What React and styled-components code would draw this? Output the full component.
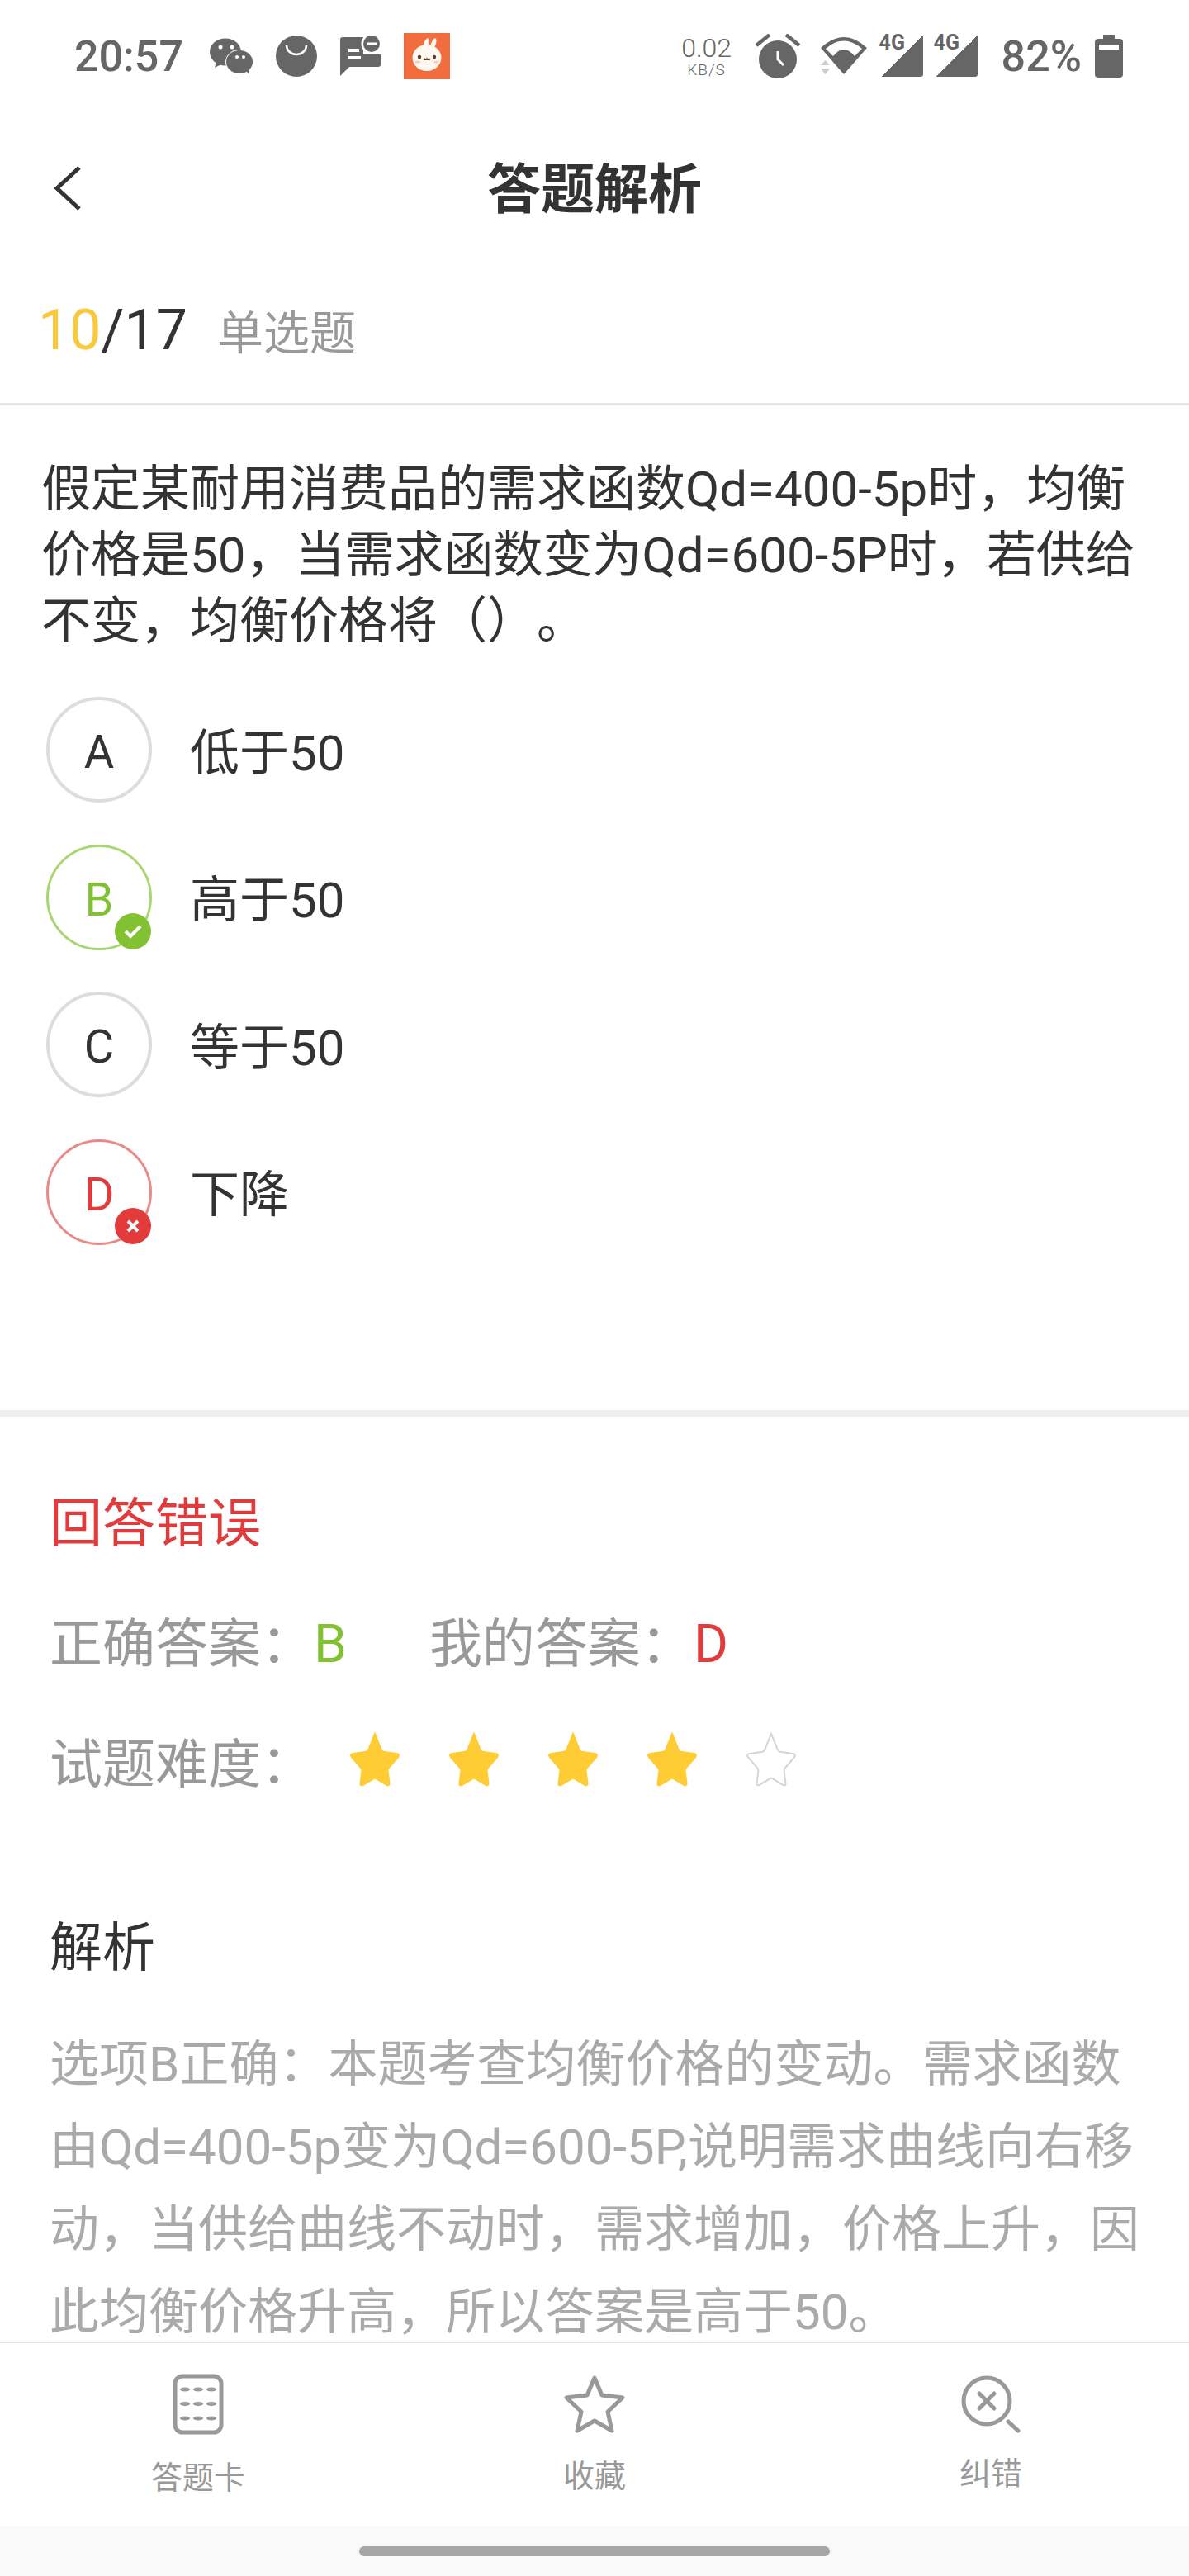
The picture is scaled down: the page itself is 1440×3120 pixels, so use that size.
import styled, { createGlobalStyle } from "styled-components";

const GREEN = "#82c232";
const RED = "#e23b3b";

const options = [
  { key: "A", text: "低于50" },
  { key: "B", text: "高于50", state: "right" },
  { key: "C", text: "等于50" },
  { key: "D", text: "下降", state: "wrong" },
];

const STAR_PATH =
  "M32 4 L40 24 Q41 26 43 26.500 L60 29 Q63 30 61 33 L49 47 Q48 48 48 50 L50 66 Q50 69 47 68 L33 59.500 Q32 59 31 59.500 L17 68 Q14 69 14 66 L16 50 Q16 48 15 47 L3 33 Q1 30 4 29 L21 26.500 Q23 26 24 24 Z";

function WechatIcon() {
  return (
    <svg width="52" height="44" viewBox="0 0 52 44">
      <ellipse cx="19" cy="17" rx="19" ry="16.500" fill="#666" />
      <path d="M8 28l-2 8 10-5z" fill="#666" />
      <circle cx="13" cy="11" r="2.500" fill="#fff" />
      <circle cx="27" cy="11" r="2.500" fill="#fff" />
      <ellipse cx="36" cy="29" rx="17" ry="15" fill="#fff" />
      <ellipse cx="36" cy="29" rx="16" ry="14" fill="#666" />
      <path d="M42 38l6 6-1-9z" fill="#666" />
      <circle cx="33" cy="23" r="2" fill="#fff" />
      <circle cx="41" cy="23" r="2" fill="#fff" />
    </svg>
  );
}

function BagIcon() {
  return (
    <svg width="50" height="50" viewBox="0 0 50 50">
      <circle cx="25" cy="25" r="25" fill="#666" />
      <path d="M13 12a12 11 0 0 0 24 0" fill="none" stroke="#fff" strokeWidth="2.500" />
    </svg>
  );
}

function NoticeIcon() {
  return (
    <svg width="49" height="48" viewBox="0 0 49 48">
      <path d="M3 1h25v21h21v12q0 3-3 3H11L0 48V4q0-3 3-3z" fill="#666" />
      <rect x="10" y="15" width="13" height="4" fill="#fff" />
      <rect x="10" y="24" width="15" height="4" fill="#fff" />
      <circle cx="38" cy="9" r="12.500" fill="#fff" />
      <circle cx="38" cy="9" r="10" fill="#666" />
      <rect x="32" y="7.500" width="12" height="3" fill="#fff" />
    </svg>
  );
}

function RabbitIcon() {
  return (
    <svg width="56" height="56" viewBox="0 0 56 56">
      <rect width="56" height="56" fill="#f26d3d" />
      <ellipse cx="27" cy="13" rx="2.800" ry="7" fill="#fff8f0" transform="rotate(20 27 13)" />
      <ellipse cx="36" cy="13" rx="2.800" ry="7" fill="#fff8f0" transform="rotate(20 36 13)" />
      <ellipse cx="28" cy="30" rx="17.500" ry="16" fill="#fff8f0" />
      <circle cx="19" cy="29" r="2.200" fill="#6b3a1e" />
      <circle cx="37" cy="29" r="2.200" fill="#6b3a1e" />
      <path d="M24 33l1-3 2 2 1-3 1 3 2-2 1 3z" fill="#6b3a1e" />
      <ellipse cx="17" cy="35" rx="3" ry="1.500" fill="#f9c9c0" />
      <ellipse cx="40" cy="35" rx="3" ry="1.500" fill="#f9c9c0" />
    </svg>
  );
}

function AlarmIcon() {
  return (
    <AlarmSvg width="54" height="54" viewBox="0 0 54 54">
      <path d="M1 14L17 1M37 1L53 14" stroke="#666" strokeWidth="4.500" />
      <circle cx="27" cy="31" r="23" fill="#666" />
      <path d="M27 21v10l7 7" fill="none" stroke="#fff" strokeWidth="3" />
    </AlarmSvg>
  );
}

function WifiIcon() {
  return (
    <WifiSvg width="56" height="46" viewBox="0 0 56 46">
      <path d="M0 13Q28-13 56 13L28 45z" fill="#666" />
      <path d="M6 14Q28-5 50 14L41 23Q28 7 15 23Z" fill="#fff" />
      <path d="M0 34L5.500 28L11 34zM0 38H11L5.500 45z" fill="#ccc" />
    </WifiSvg>
  );
}

function BatteryIcon() {
  return (
    <svg width="34" height="52" viewBox="0 0 34 52">
      <path d="M10 0h14v5h6q4 0 4 4v39q0 4-4 4H4q-4 0-4-4V9q0-4 4-4h6z" fill="#666" />
      <rect x="5" y="12" width="24" height="6" fill="#fff" />
    </svg>
  );
}

function CardIcon() {
  const dots = [];
  for (let r = 0; r < 3; r++) {
    for (let c = 0; c < 3; c++) {
      dots.push(<ellipse key={`${r}${c}`} cx={15 + c * 16} cy={19 + r * 17.500} rx="6" ry="2.500" fill="#999" />);
    }
  }
  return (
    <svg width="62" height="74" viewBox="0 0 62 74">
      <rect x="3" y="3" width="56" height="68" rx="9" fill="none" stroke="#999" strokeWidth="5" />
      {dots}
    </svg>
  );
}

function StarOutlineIcon() {
  return (
    <svg width="74" height="72" viewBox="0 0 74 72" fill="none">
      <path
        d="M37 5L46 26L71 29L53 46L58 69L37 57L16 69L21 46L3 29L28 26Z"
        stroke="#999"
        strokeWidth="5"
        strokeLinejoin="round"
      />
    </svg>
  );
}

function SearchErrorIcon() {
  return (
    <svg width="72" height="70" viewBox="0 0 72 70" fill="none" stroke="#999" strokeWidth="5" strokeLinecap="round">
      <circle cx="31" cy="31" r="28" />
      <path d="M22 22l18 18M40 22L22 40" />
      <path d="M57 56l12 11" />
    </svg>
  );
}

export default function App() {
  return (
    <>
      <GlobalStyle />
      <Page>
        <StatusBar>
          <StatusLeft>
            <Clock>20:57</Clock>
            <WechatIcon />
            <BagIcon />
            <NoticeIcon />
            <RabbitIcon />
          </StatusLeft>
          <StatusRight>
            <Speed>
              <b>0.02</b>
              <span>KB/S</span>
            </Speed>
            <AlarmIcon />
            <WifiIcon />
            <Signal><small>4G</small></Signal>
            <Signal><small>4G</small></Signal>
            <BatteryText>82%</BatteryText>
            <BatteryIcon />
          </StatusRight>
        </StatusBar>

        <NavBar>
          <BackBtn>
            <svg width="36" height="56" viewBox="0 0 36 56" fill="none">
              <path d="M32 3L5 28l27 25" stroke="#333" strokeWidth="5" />
            </svg>
          </BackBtn>
          <Title>答题解析</Title>
        </NavBar>

        <Counter>
          <Progress>
            <em>10</em>/17
          </Progress>
          <QuestionType>单选题</QuestionType>
        </Counter>

        <Content>
          <Question>
            假定某耐用消费品的需求函数Qd=400-5p时，均衡价格是50，当需求函数变为Qd=600-5P时，若供给不变，均衡价格将（）。
          </Question>
          <OptionList>
            {options.map((option) => (
              <OptionRow key={option.key}>
                <OptionCircle $state={option.state}>
                  {option.key}
                  {option.state === "right" && (
                    <Badge $color={GREEN}>
                      <svg width="22" height="18" viewBox="0 0 22 18" fill="none">
                        <path d="M2 9l6 6L20 3" stroke="#fff" strokeWidth="4" />
                      </svg>
                    </Badge>
                  )}
                  {option.state === "wrong" && (
                    <Badge $color={RED}>
                      <svg width="18" height="18" viewBox="0 0 18 18" fill="none">
                        <path d="M3 3l12 12M15 3L3 15" stroke="#fff" strokeWidth="4" />
                      </svg>
                    </Badge>
                  )}
                </OptionCircle>
                <OptionText>{option.text}</OptionText>
              </OptionRow>
            ))}
          </OptionList>

          <Analysis>
            <ResultTitle>回答错误</ResultTitle>
            <AnswerRow>
              <span>正确答案：<AnswerKey $color={GREEN}>B</AnswerKey></span>
              <span>我的答案：<AnswerKey $color={RED}>D</AnswerKey></span>
            </AnswerRow>
            <DifficultyRow>
              <span>试题难度：</span>
              <Stars>
                {[1, 2, 3, 4, 5].map((n) => (
                  <svg key={n} width="68" height="70" viewBox="-1 -1 66 72">
                    <path
                      d={STAR_PATH}
                      fill={n < 5 ? "#ffcc33" : "#fff"}
                      stroke={n < 5 ? "#ffcc33" : "#d4d4d8"}
                      strokeWidth="2"
                    />
                  </svg>
                ))}
              </Stars>
            </DifficultyRow>
            <AnalysisTitle>解析</AnalysisTitle>
            <AnalysisText>
              选项B正确：本题考查均衡价格的变动。需求函数由Qd=400-5p变为Qd=600-5P,说明需求曲线向右移动，当供给曲线不动时，需求增加，价格上升，因此均衡价格升高，所以答案是高于50。
            </AnalysisText>
          </Analysis>
        </Content>

        <TabBar>
          <Tab>
            <CardIcon />
            <span>答题卡</span>
          </Tab>
          <Tab>
            <StarOutlineIcon />
            <span>收藏</span>
          </Tab>
          <Tab $compact>
            <SearchErrorIcon />
            <span>纠错</span>
          </Tab>
        </TabBar>

        <HomeArea>
          <HomePill />
        </HomeArea>
      </Page>
    </>
  );
}

const GlobalStyle = createGlobalStyle`
  html, body {
    margin: 0;
    padding: 0;
    background: #fff;
  }
  body {
    font-family: Roboto, "Noto Sans CJK SC", sans-serif;
    text-spacing-trim: space-all;
  }
`;

const Page = styled.div`
  width: 1440px;
  height: 3120px;
  display: flex;
  flex-direction: column;
  overflow: hidden;
  color: #333;
  background: #fff;
`;

const StatusBar = styled.div`
  height: 136px;
  flex-shrink: 0;
  display: flex;
  align-items: center;
  justify-content: space-between;
  padding: 0 80px 0 90px;
  color: #666;
`;

const StatusLeft = styled.div`
  display: flex;
  align-items: center;
  gap: 28px;
`;

const StatusRight = styled.div`
  display: flex;
  align-items: center;
  gap: 16px;
`;

const Clock = styled.span`
  font-size: 52px;
  font-weight: 500;
  margin-right: 4px;
`;

const Speed = styled.div`
  width: 58px;
  display: flex;
  flex-direction: column;
  align-items: center;
  margin-right: 14px;
  b {
    font-size: 32px;
    font-weight: 300;
    line-height: 34px;
  }
  span {
    font-size: 19px;
    font-weight: 300;
    line-height: 20px;
    letter-spacing: 1px;
  }
`;

const AlarmSvg = styled.svg`
  margin-right: 9px;
`;

const WifiSvg = styled.svg`
  margin-right: 2px;
`;

const Signal = styled.div`
  position: relative;
  width: 50px;
  height: 50px;
  background: linear-gradient(to bottom right, transparent 50%, #666 50%);
  border-bottom-right-radius: 3px;
  small {
    position: absolute;
    top: -3px;
    left: -3px;
    font-size: 25px;
    font-weight: 700;
    line-height: 24px;
  }
`;

const BatteryText = styled.span`
  font-size: 52px;
  font-weight: 500;
  margin-left: 13px;
`;

const NavBar = styled.div`
  position: relative;
  box-sizing: border-box;
  height: 184px;
  padding-bottom: 8px;
  flex-shrink: 0;
  display: flex;
  align-items: center;
  justify-content: center;
`;

const BackBtn = styled.div`
  position: absolute;
  left: 64px;
  top: 64px;
  line-height: 0;
`;

const Title = styled.h1`
  margin: 0;
  font-size: 65px;
  font-weight: 700;
  color: #333;
`;

const Counter = styled.div`
  height: 160px;
  flex-shrink: 0;
  display: flex;
  align-items: center;
  gap: 36px;
  padding: 0 0 8px 46px;
  border-bottom: 3px solid #e6e6e6;
`;

const Progress = styled.div`
  font-size: 68px;
  color: #333;
  em {
    font-style: normal;
    color: #f8c93e;
  }
`;

const QuestionType = styled.div`
  font-size: 56px;
  margin-bottom: 4px;
  color: #999;
`;

const Content = styled.div`
  flex: 1;
  min-height: 0;
  overflow: hidden;
`;

const Question = styled.p`
  margin: 0;
  padding: 62px 46px 0 50px;
  font-size: 60px;
  line-height: 80px;
  color: #333;
`;

const OptionList = styled.div`
  display: flex;
  flex-direction: column;
  gap: 50.670px;
  padding: 51px 56px 200px;
  border-bottom: 8px solid #eee;
`;

const OptionRow = styled.div`
  display: flex;
  align-items: center;
  gap: 46px;
`;

const stateColors = {
  right: { border: "#a9d673", text: GREEN },
  wrong: { border: "#e98a88", text: RED },
};

const OptionCircle = styled.div`
  position: relative;
  box-sizing: border-box;
  width: 128px;
  height: 128px;
  padding-top: 6px;
  border-radius: 50%;
  display: flex;
  align-items: center;
  justify-content: center;
  font-size: 56px;
  border: ${({ $state }) =>
    $state ? `3px solid ${stateColors[$state].border}` : "4px solid #ddd"};
  color: ${({ $state }) => ($state ? stateColors[$state].text : "#333")};
`;

const Badge = styled.span`
  position: absolute;
  right: -2px;
  bottom: -2px;
  width: 44px;
  height: 44px;
  border-radius: 50%;
  display: flex;
  align-items: center;
  justify-content: center;
  background: ${({ $color }) => $color};
`;

const OptionText = styled.div`
  font-size: 60px;
  margin-bottom: 4px;
  color: #333;
`;

const Analysis = styled.div`
  padding: 85px 60px 0;
`;

const ResultTitle = styled.div`
  font-size: 64px;
  line-height: 90px;
  color: ${RED};
`;

const AnswerRow = styled.div`
  display: flex;
  gap: 100px;
  margin-top: 56px;
  font-size: 64px;
  line-height: 90px;
  color: #999;
`;

const AnswerKey = styled.span`
  color: ${({ $color }) => $color};
`;

const DifficultyRow = styled.div`
  display: flex;
  align-items: center;
  gap: 40px;
  margin-top: 56px;
  font-size: 64px;
  line-height: 90px;
  color: #999;
`;

const Stars = styled.div`
  display: flex;
  gap: 52px;
  margin-top: -16px;
`;

const AnalysisTitle = styled.div`
  margin-top: 132px;
  font-size: 64px;
  line-height: 90px;
  color: #333;
`;

const AnalysisText = styled.p`
  margin: 46px 0 0;
  font-size: 60px;
  line-height: 100px;
  color: #aaa;
`;

const TabBar = styled.div`
  height: 222px;
  flex-shrink: 0;
  display: grid;
  grid-template-columns: repeat(3, 1fr);
  border-top: 2px solid #e6e6e6;
  background: #fff;
`;

const Tab = styled.div`
  display: flex;
  flex-direction: column;
  align-items: center;
  padding-top: ${({ $compact }) => ($compact ? "39px" : "37px")};
  gap: ${({ $compact }) => ($compact ? "27px" : "30px")};
  font-size: 38px;
  line-height: 44px;
  color: #999;
  svg {
    flex-shrink: 0;
  }
`;

const HomeArea = styled.div`
  height: 60px;
  flex-shrink: 0;
  display: flex;
  justify-content: center;
  padding-top: 24px;
  box-sizing: border-box;
  background: #f9f9f9;
`;

const HomePill = styled.div`
  width: 570px;
  height: 12px;
  border-radius: 6px;
  background: #a6a6a6;
`;
